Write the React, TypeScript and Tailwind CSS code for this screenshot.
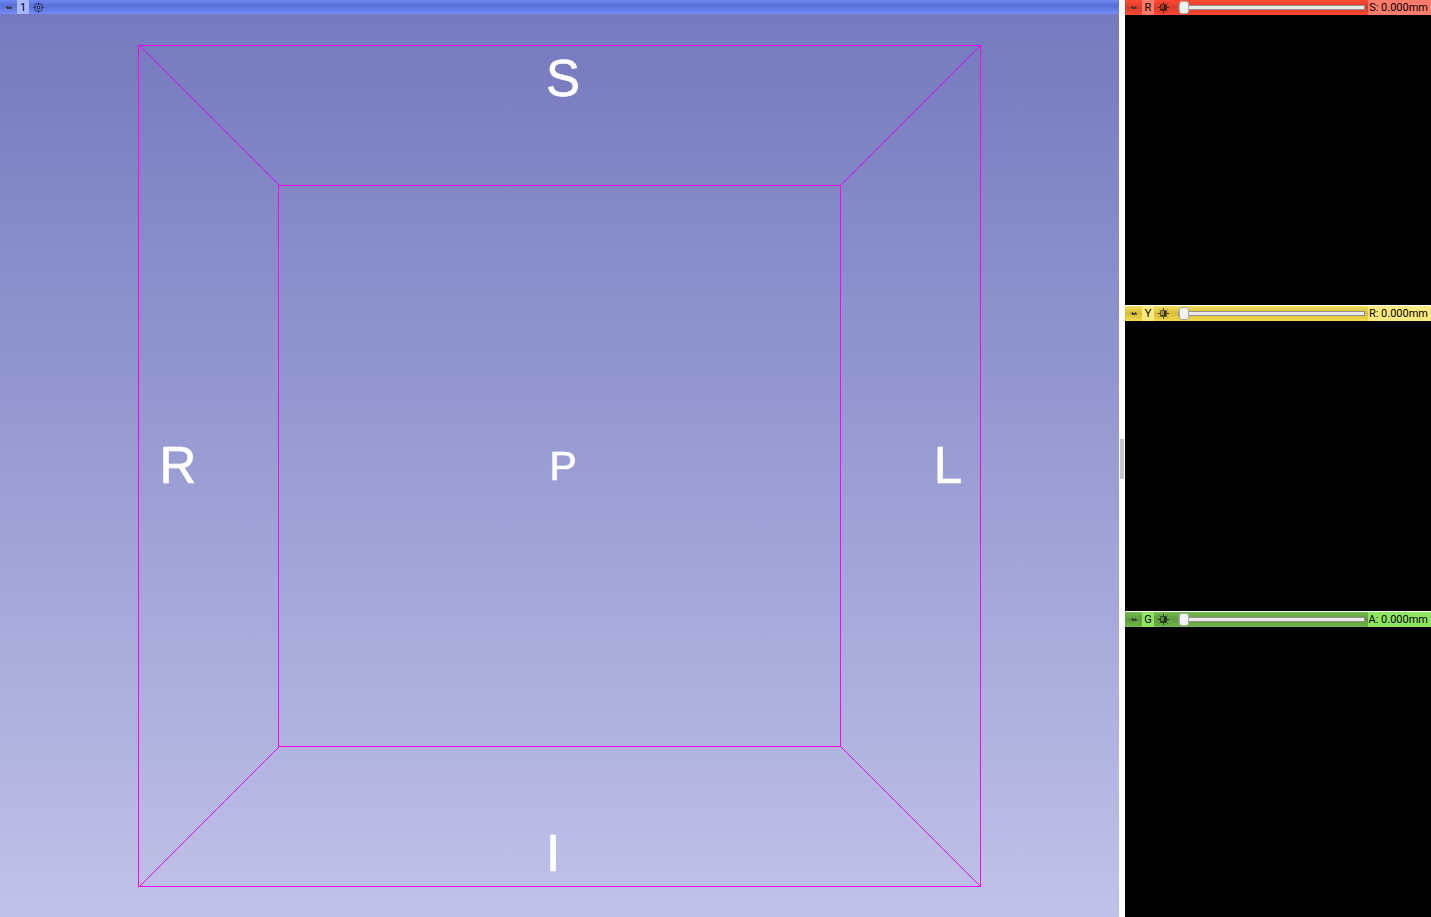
import { useState } from "react";

function Pin() {
  return (
    <svg width="8" height="7" viewBox="0 0 8 7" shapeRendering="crispEdges" fill="#333" aria-hidden="true">
      <rect x="0" y="3" width="2" height="1" opacity=".5" />
      <rect x="2" y="2" width="1" height="3" />
      <rect x="3" y="3" width="2" height="2" opacity=".85" />
      <rect x="5" y="2" width="1" height="3" opacity=".75" />
      <rect x="6" y="3" width="1" height="2" opacity=".6" />
    </svg>
  );
}

function Crosshair() {
  return (
    <svg width="11" height="11" viewBox="0 0 11 11" fill="none" stroke="#2c376b" aria-hidden="true">
      <rect x="2" y="2" width="7" height="7" rx="1" />
      <path d="M5.5 0v3M5.5 8v3M0 5.5h3M8 5.5h3" />
      <rect x="4.5" y="4.5" width="2" height="2" fill="#b7c4ff" />
    </svg>
  );
}

type Pane = {
  letter: string;
  name: string;
  axis: string;
  bar: string;
  chip: string;
  light: string;
  dark: string;
};

const panes: Pane[] = [
  { letter: "R", name: "Red", axis: "S", bar: "bg-linear-to-b from-[#ff4a34] via-[#dc3b28] to-[#fa4933]", chip: "bg-[#ff7b6c]", light: "#a8382a", dark: "#65231b" },
  { letter: "Y", name: "Yellow", axis: "R", bar: "bg-linear-to-b from-[#f4df60] via-[#d7bc36] to-[#f2da4c]", chip: "bg-[#ffea80]", light: "#a79342", dark: "#6b5b20" },
  { letter: "G", name: "Green", axis: "A", bar: "bg-linear-to-b from-[#74bc50] via-[#5c9a3c] to-[#72b84e]", chip: "bg-[#8ee660]", light: "#5c8a48", dark: "#2c4a22" },
];

function SliceIcon({ light, dark }: { light: string; dark: string }) {
  return (
    <svg width="11" height="11" viewBox="0 0 11 11" aria-hidden="true">
      <path d="M5 0h1v2H5zM5 9h1v2H5zM0 5h2v1H0zM9 5h2v1H9z" fill="#28201a" opacity=".8" />
      <path d="M1 1h1v1H1zM9 1h1v1H9zM1 9h1v1H1zM9 9h1v1H9z" fill={dark} opacity=".4" />
      <rect x="2" y="2" width="7" height="7" rx="1" fill={dark} />
      <rect x="3" y="3" width="3" height="4" fill={light} />
      <path d="M6 3h2v5H4V7h2z" fill="#1d1913" opacity=".65" />
    </svg>
  );
}

function SlicePane({ pane }: { pane: Pane }) {
  const [offset, setOffset] = useState(0);
  return (
    <section className="flex min-h-0 flex-1 flex-col bg-black" aria-label={`${pane.name} slice`}>
      <header className={`flex h-[15px] shrink-0 items-center ${pane.bar}`}>
        <button className="flex h-full w-[17px] items-center justify-center" aria-label={`Pin ${pane.name} controls`}>
          <Pin />
        </button>
        <span className={`flex h-full w-3 justify-center leading-4 ${pane.chip}`}>{pane.letter}</span>
        <button className="ml-1 flex h-full w-[11px] items-center justify-center" aria-label={`Fit ${pane.name} slice`}>
          <SliceIcon light={pane.light} dark={pane.dark} />
        </button>
        <input
          type="range"
          min="0"
          max="100"
          value={offset}
          onChange={(e) => setOffset(Number(e.target.value))}
          aria-label={`${pane.name} slice offset`}
          className="mr-[3px] ml-[9px] h-[13px] min-w-0 flex-1 appearance-none bg-transparent [&::-webkit-slider-runnable-track]:h-[5px] [&::-webkit-slider-runnable-track]:border [&::-webkit-slider-runnable-track]:border-[#94908a] [&::-webkit-slider-runnable-track]:bg-[#e9e9e9] [&::-webkit-slider-thumb]:-mt-[5px] [&::-webkit-slider-thumb]:h-[13px] [&::-webkit-slider-thumb]:w-[10px] [&::-webkit-slider-thumb]:appearance-none [&::-webkit-slider-thumb]:rounded-[3px] [&::-webkit-slider-thumb]:border [&::-webkit-slider-thumb]:border-[#aaa] [&::-webkit-slider-thumb]:bg-[#f2f2f2]"
        />
        <output className={`flex h-full w-[63px] shrink-0 justify-end pr-[3px] leading-4 whitespace-nowrap ${pane.chip}`}>
          {pane.axis}: {offset.toFixed(3)}mm
        </output>
      </header>
    </section>
  );
}

export default function App() {
  return (
    <main className="flex h-screen overflow-hidden bg-white font-[Roboto,'Noto_Sans',sans-serif] text-[11px] text-black">
      <section className="flex min-w-0 flex-1 flex-col" aria-label="3D view">
        <header className="flex h-[14px] shrink-0 items-center bg-linear-to-b from-[#7188f4] via-[#586fd4] via-40% to-[#758cf8]">
          <button className="flex h-full w-[17px] items-center justify-center" aria-label="Pin 3D view controls">
            <Pin />
          </button>
          <span className="flex h-full w-3 justify-center bg-[#aab8ff] leading-4">1</span>
          <button className="ml-1 flex h-full w-[11px] items-center justify-center" aria-label="Center view">
            <Crosshair />
          </button>
        </header>
        <div className="min-h-0 flex-1 bg-linear-to-b from-[#7579be] to-[#c0c2e8]">
          <svg className="h-full w-full" viewBox="0 14 1119 903" role="img" aria-label="Orientation cube">
            <g fill="none" stroke="#ff00ff" shapeRendering="crispEdges">
              <rect x="138.5" y="45.5" width="842" height="841" />
              <rect x="278.5" y="185.5" width="562" height="561" />
              <path d="M139.5 45.5L279.5 185.5M980.5 45.5L840.5 185.5M139.5 886.5L279.5 746.5M980.5 886.5L840.5 746.5" />
            </g>
            <g fill="white" stroke="white" strokeWidth=".6" fontFamily="Liberation Sans, Arial, sans-serif" textAnchor="middle">
              <text x="563" y="96" fontSize="51">S</text>
              <text x="178" y="483" fontSize="51">R</text>
              <text x="563" y="480" fontSize="41">P</text>
              <text x="948" y="483" fontSize="51">L</text>
              <text x="553" y="871" fontSize="51">I</text>
            </g>
          </svg>
        </div>
      </section>
      <div className="flex w-[6px] shrink-0 items-center justify-end" role="separator" aria-orientation="vertical">
        <div className="mr-px h-10 w-1 bg-[repeating-linear-gradient(to_bottom,#c1c1c1_0px,#c1c1c1_1px,#cbcbcb_1px,#cbcbcb_2px)]" />
      </div>
      <aside className="flex w-[306px] shrink-0 flex-col gap-px">
        {panes.map((pane) => (
          <SlicePane key={pane.letter} pane={pane} />
        ))}
      </aside>
    </main>
  );
}
